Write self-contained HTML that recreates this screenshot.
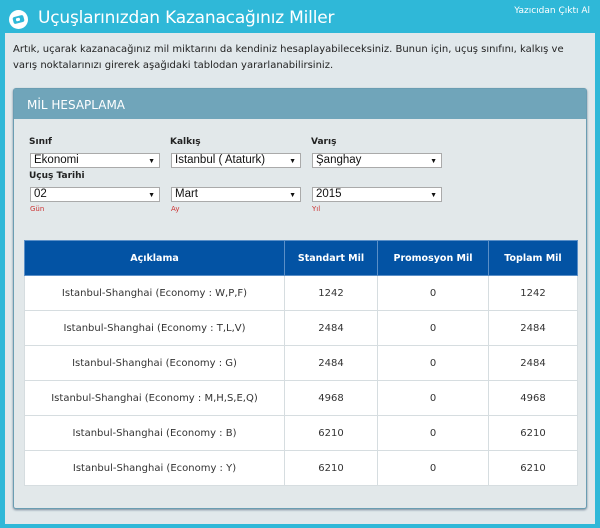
<!DOCTYPE html>
<html><head><meta charset="utf-8"><style>
*{margin:0;padding:0;box-sizing:border-box}
body{width:600px;height:528px;background:#2fb8d8;font-family:"DejaVu Sans","Liberation Sans",sans-serif;position:relative;overflow:hidden}
.hdr{position:absolute;left:0;top:0;width:600px;height:34px}
.ic{position:absolute;left:9px;top:10px;width:19px;height:19px;border-radius:50%;background:#fff}
.ic i{position:absolute;left:4px;top:6px;width:11px;height:7px;border-radius:2px;background:#2fb8d8;transform:rotate(-15deg)}
.ic b{position:absolute;left:7px;top:8px;width:4px;height:3px;border-radius:1px;background:#fff;transform:rotate(-15deg)}
.ttl{position:absolute;left:38px;top:8px;color:#fff;font-size:17px;letter-spacing:-0.2px}
.pr{position:absolute;right:10px;top:6px;color:#fff;font-size:9px}
.cnt{position:absolute;left:5px;top:33px;width:590px;height:491px;background:#e1e8eb}
.intro{position:absolute;left:8px;top:9px;font-size:10px;line-height:16px;color:#222;width:560px}
.pnl{position:absolute;left:8px;top:55px;width:574px;height:421px;border:1px solid #6a9db2;border-radius:3px;background:#e2e8ea;box-shadow:0 1px 2px #789}
.ph{height:30px;background:#70a5ba;color:#fff;font-size:12px;padding:9px 0 0 13px}
.lb{position:absolute;font-size:9px;font-weight:bold;color:#222}
.sel{position:absolute;width:130px;height:15px;background:#fff;border:1px solid #aaa;font-family:"Liberation Sans",sans-serif;font-size:11.5px;padding-left:3px;line-height:13px;color:#111}
.sel:after{content:"▼";position:absolute;right:4px;top:1px;font-size:7px}
.hint{position:absolute;font-size:7px;color:#c33}
table{position:absolute;left:10px;top:151px;width:554px;border-collapse:collapse;background:#fff;font-size:10px;color:#333}
th{background:#0353a4;color:#fff;height:35px;font-size:9.5px;border:1px solid #5b8fc7;font-weight:bold}
td{height:35px;text-align:center;border:1px solid #d6dde0}
</style></head><body>
<div class="hdr"><div class="ic"><i></i><b></b></div><div class="ttl">Uçuşlarınızdan Kazanacağınız Miller</div><div class="pr">Yazıcıdan Çıktı Al</div></div>
<div class="cnt">
<div class="intro">Artık, uçarak kazanacağınız mil miktarını da kendiniz hesaplayabileceksiniz. Bunun için, uçuş sınıfını, kalkış ve varış noktalarınızı girerek aşağıdaki tablodan yararlanabilirsiniz.</div>
<div class="pnl">
<div class="ph">MİL HESAPLAMA</div>
<div class="lb" style="left:15px;top:48px">Sınıf</div>
<div class="lb" style="left:156px;top:48px">Kalkış</div>
<div class="lb" style="left:297px;top:48px">Varış</div>
<div class="sel" style="left:16px;top:64px">Ekonomi</div>
<div class="sel" style="left:157px;top:64px">Istanbul ( Ataturk)</div>
<div class="sel" style="left:298px;top:64px">Şanghay</div>
<div class="lb" style="left:15px;top:82px">Uçuş Tarihi</div>
<div class="sel" style="left:16px;top:98px">02</div>
<div class="sel" style="left:157px;top:98px">Mart</div>
<div class="sel" style="left:298px;top:98px">2015</div>
<div class="hint" style="left:16px;top:116px">Gün</div>
<div class="hint" style="left:157px;top:116px">Ay</div>
<div class="hint" style="left:298px;top:116px">Yıl</div>
<table>
<tr><th style="width:260px">Açıklama</th><th style="width:93px">Standart Mil</th><th style="width:111px">Promosyon Mil</th><th>Toplam Mil</th></tr>
<tr><td>Istanbul-Shanghai (Economy : W,P,F)</td><td>1242</td><td>0</td><td>1242</td></tr>
<tr><td>Istanbul-Shanghai (Economy : T,L,V)</td><td>2484</td><td>0</td><td>2484</td></tr>
<tr><td>Istanbul-Shanghai (Economy : G)</td><td>2484</td><td>0</td><td>2484</td></tr>
<tr><td>Istanbul-Shanghai (Economy : M,H,S,E,Q)</td><td>4968</td><td>0</td><td>4968</td></tr>
<tr><td>Istanbul-Shanghai (Economy : B)</td><td>6210</td><td>0</td><td>6210</td></tr>
<tr><td>Istanbul-Shanghai (Economy : Y)</td><td>6210</td><td>0</td><td>6210</td></tr>
</table>
</div>
</div>
</body></html>
